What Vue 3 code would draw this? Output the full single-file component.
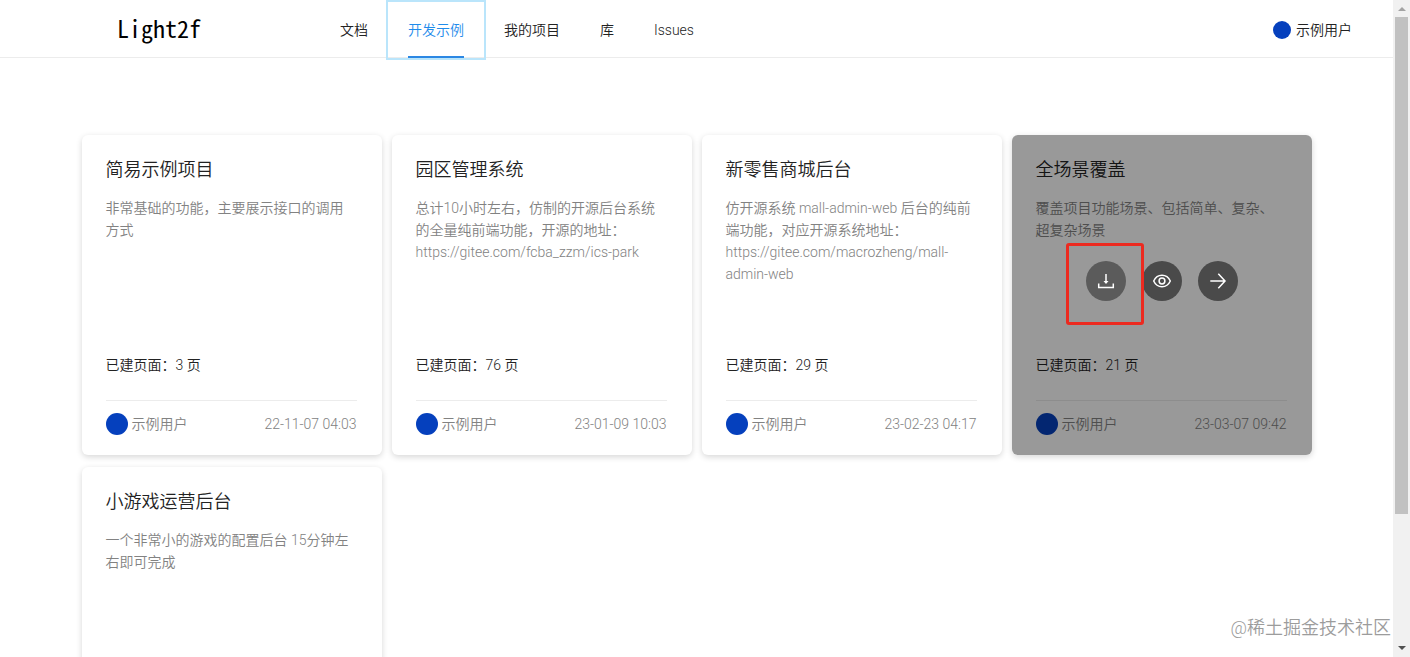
<template>
  <div class="layout">
    <div class="page">
      <header class="header">
        <div class="logo">Light2f</div>
        <nav class="menu">
          <a
            v-for="item in menus"
            :key="item"
            href="#"
            class="menu-item"
            :class="{ active: item === current }"
            @click.prevent="current = item"
          ><span class="menu-text">{{ item }}</span></a>
        </nav>
        <div class="user">
          <span class="user-avatar"></span>
          <span class="user-name">示例用户</span>
        </div>
      </header>

      <main class="cards">
        <article v-for="project in projects" :key="project.name" class="card">
          <h2 class="name">{{ project.name }}</h2>
          <p class="desc">{{ project.desc }}</p>
          <div v-if="project.count" class="count">已建页面：{{ project.count }} 页</div>
          <div v-if="project.time" class="footer">
            <span class="avatar"></span>
            <span class="author">示例用户</span>
            <span class="time">{{ project.time }}</span>
          </div>
          <div v-if="project.hover" class="mask">
            <button type="button" class="action download" aria-label="下载">
              <svg viewBox="0 0 20 20" width="20" height="20">
                <path d="M10 3v9" />
                <path d="M7.500 10h5L10 13z" class="solid" />
                <path d="M2.700 12.500v4h14.600v-4" />
              </svg>
              <span class="marker"></span>
            </button>
            <button type="button" class="action" aria-label="预览">
              <svg viewBox="0 0 20 20" width="20" height="20">
                <path d="M1.700 10C3.500 6 6.400 4.300 10 4.300S16.500 6 18.300 10C16.500 14 13.600 15.700 10 15.700S3.500 14 1.700 10z" />
                <circle cx="10" cy="10" r="2.900" />
              </svg>
            </button>
            <button type="button" class="action" aria-label="进入">
              <svg viewBox="0 0 20 20" width="20" height="20">
                <path d="M2.300 10h14.500M10.300 2.800L17 10l-6.700 7.200" />
              </svg>
            </button>
          </div>
        </article>
      </main>
    </div>

    <div class="scrollbar">
      <svg class="arrow up" viewBox="0 0 17 17"><path d="M5 11h8L9 7z" /></svg>
      <div class="thumb"></div>
      <div class="rest"></div>
      <svg class="arrow" viewBox="0 0 17 17"><path d="M5 6h8l-4 4z" /></svg>
    </div>

    <div class="watermark">@稀土掘金技术社区</div>
  </div>
</template>

<script setup>
import { ref } from "vue";

const menus = ["文档", "开发示例", "我的项目", "库", "Issues"];
const current = ref("开发示例");

const projects = [
  {
    name: "简易示例项目",
    desc: "非常基础的功能，主要展示接口的调用方式",
    count: 3,
    time: "22-11-07 04:03",
  },
  {
    name: "园区管理系统",
    desc: "总计10小时左右，仿制的开源后台系统的全量纯前端功能，开源的地址：https://gitee.com/fcba_zzm/ics-park",
    count: 76,
    time: "23-01-09 10:03",
  },
  {
    name: "新零售商城后台",
    desc: "仿开源系统 mall-admin-web 后台的纯前端功能，对应开源系统地址：https://gitee.com/macrozheng/mall-admin-web",
    count: 29,
    time: "23-02-23 04:17",
  },
  {
    name: "全场景覆盖",
    desc: "覆盖项目功能场景、包括简单、复杂、超复杂场景",
    count: 21,
    time: "23-03-07 09:42",
    hover: true,
  },
  {
    name: "小游戏运营后台",
    desc: "一个非常小的游戏的配置后台 15分钟左右即可完成",
  },
];
</script>

<style>
body {
  background-color: #fff;
}
</style>

<style scoped>
.layout {
  position: relative;
  display: flex;
  height: 100vh;
  overflow: hidden;
  font-family: Roboto, "Noto Sans CJK SC", sans-serif;
  font-size: 14px;
  font-weight: 350;
  line-height: 22px;
  color: #222;
}

.page {
  flex: 1;
  min-width: 0;
  overflow: hidden;
}

.header {
  display: flex;
  box-sizing: border-box;
  height: 58px;
  padding: 2px 41px 0 117px;
  box-shadow: inset 0 -1px #ececec;
}

.logo {
  width: 203px;
  font-family: "Noto Sans Mono CJK SC", "DejaVu Sans Mono", monospace;
  font-size: 24px;
  line-height: 52px;
  color: #000;
}

.menu {
  display: flex;
}

.menu-item {
  padding: 0 20px;
  color: #222;
  text-decoration: none;
}

.menu-text {
  display: block;
  box-sizing: border-box;
  height: 56px;
  line-height: 56px;
}

.active {
  color: #1f8ceb;
  outline: 2px solid #bae5fb;
}

.active .menu-text {
  border-bottom: 2px solid #2b87e3;
}

.user {
  display: flex;
  align-items: center;
  gap: 5px;
  margin-left: auto;
}

.user-avatar {
  width: 18px;
  height: 18px;
  border-radius: 50%;
  background-color: #0540bd;
}

.cards {
  display: grid;
  grid-template-columns: repeat(auto-fill, 300px);
  justify-content: center;
  gap: 12px 10px;
  padding: 77px 24px;
}

.card {
  position: relative;
  display: flex;
  flex-direction: column;
  box-sizing: border-box;
  height: 320px;
  padding: 20px 25px 20px 24px;
  border-radius: 6px;
  background-color: #fff;
  box-shadow: 0 2px 6px rgba(0, 0, 0, 0.16);
}

.name {
  margin: 0 0 12px;
  font-size: 18px;
  font-weight: inherit;
  line-height: 30px;
}

.desc {
  flex: 1;
  margin: 0;
  color: #828282;
  overflow-wrap: break-word;
}

.count {
  padding-bottom: 24px;
}

.footer {
  display: flex;
  align-items: center;
  padding-top: 12px;
  border-top: 1px solid #ececec;
  color: #828282;
}

.avatar {
  width: 22px;
  height: 22px;
  margin-right: 4px;
  border-radius: 50%;
  background-color: #0540bd;
}

.time {
  margin-left: auto;
}

.mask {
  position: absolute;
  inset: 0;
  display: flex;
  align-items: center;
  justify-content: center;
  gap: 16px;
  padding-bottom: 28px;
  border-radius: 6px;
  background-color: rgba(0, 0, 0, 0.4);
}

.action {
  display: flex;
  align-items: center;
  justify-content: center;
  width: 40px;
  height: 40px;
  padding: 0;
  border: none;
  border-radius: 50%;
  background-color: #4a4a4a;
  cursor: pointer;
}

.action svg {
  fill: none;
  stroke: #fff;
  stroke-width: 1.5;
}

.action .solid {
  fill: #fff;
  stroke: none;
}

.download {
  position: relative;
  z-index: 1;
  background-color: #5b5b5b;
}

.marker {
  position: absolute;
  inset: -18px -18px -24px -20px;
  border: 3px solid #ec2a20;
  border-radius: 3px;
}

.scrollbar {
  display: flex;
  flex-direction: column;
  width: 17px;
  background-color: #f1f1f1;
}

.arrow {
  width: 17px;
  height: 17px;
  fill: #505050;
}

.up {
  fill: #a3a3a3;
}

.thumb {
  flex: 497;
  margin: 0 2px;
  background-color: #c1c1c1;
}

.rest {
  flex: 126;
}

.watermark {
  position: absolute;
  right: 19px;
  bottom: 17px;
  font-size: 18px;
  line-height: 24px;
  color: #9c9c9c;
}
</style>
